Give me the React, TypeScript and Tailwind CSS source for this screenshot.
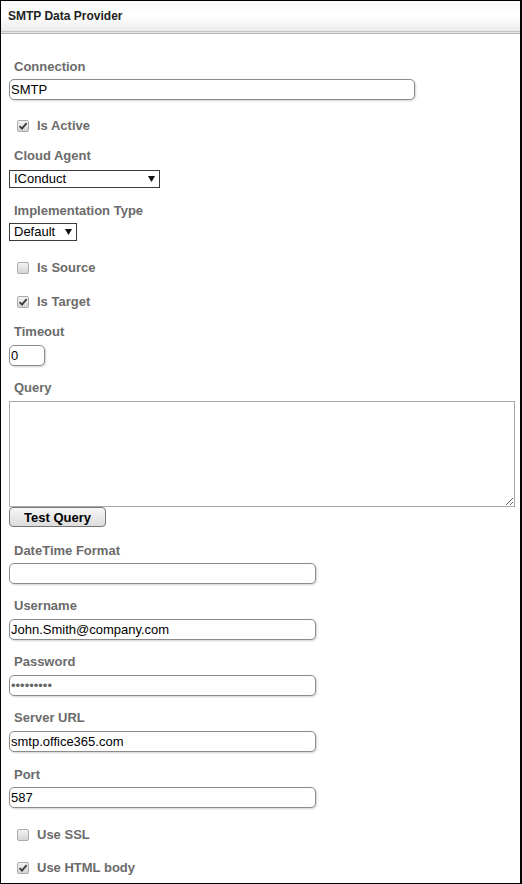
import React from 'react'

const labelCls = 'block ml-[5px] h-4 leading-4 text-[13px] font-bold text-[#6b6b6b]'
const inputCls =
  'block h-[21px] rounded-[5px] border border-[#8c8c8c] bg-white px-[1px] text-[13px] shadow-[1px_1px_2px_rgba(0,0,0,0.18)] outline-none'

function Check({ checked, label, className = '' }: { checked?: boolean; label: string; className?: string }) {
  return (
    <div className={`flex items-center h-4 ml-[8px] ${className}`}>
      <span className="flex items-center justify-center w-[12px] h-[12px] rounded-[2px] border border-[#ababab] bg-linear-to-b from-[#f2f2f2] to-[#d6d6d6]">
        {checked && (
          <svg width="10" height="10" viewBox="0 0 10 10">
            <path d="M1.6 5.2 L4 7.6 L8.6 2.2" fill="none" stroke="#3c3c3c" strokeWidth="1.8" />
          </svg>
        )}
      </span>
      <span className="ml-[8px] text-[13px] font-bold text-[#6b6b6b]">{label}</span>
    </div>
  )
}

function Select({ value, width, className = '' }: { value: string; width: string; className?: string }) {
  return (
    <div className={`flex items-center justify-between h-[18px] border border-[#3a3a3a] bg-white pl-[4px] pr-[4px] text-[13px] text-black ${width} ${className}`}>
      <span>{value}</span>
      <svg width="7" height="6" viewBox="0 0 7 6" className="ml-[4px]">
        <polygon points="0,0 7,0 3.5,6" fill="#111" />
      </svg>
    </div>
  )
}

export default function App() {
  return (
    <div className="w-[522px] h-[884px] overflow-hidden bg-white border-l border-t border-b border-r-2 border-black font-['Liberation_Sans',Arial,sans-serif]">
      <div className="flex items-center h-[30px] pl-[7px] bg-linear-to-b from-[#fafafa] via-white to-[#ebebeb] text-[12px] font-bold text-[#222]">
        SMTP Data Provider
      </div>
      <div className="h-px bg-[#c4c4c4]" />
      <div className="h-px bg-[#e6e6e6]" />
      <div className="h-px bg-[#b4b4b4]" />

      <div className="pl-[8px]">
        <label className={`${labelCls} mt-[25px]`}>Connection</label>
        <input readOnly value="SMTP" className={`${inputCls} text-black mt-[4px] w-[406px]`} />

        <Check checked label="Is Active" className="mt-[18px]" />

        <label className={`${labelCls} mt-[14px]`}>Cloud Agent</label>
        <Select value="IConduct" width="w-[151px]" className="mt-[6px]" />

        <label className={`${labelCls} mt-[15px]`}>Implementation Type</label>
        <Select value="Default" width="w-[68px]" className="mt-[4px]" />

        <Check label="Is Source" className="mt-[19px]" />
        <Check checked label="Is Target" className="mt-[18px]" />

        <label className={`${labelCls} mt-[14px]`}>Timeout</label>
        <input readOnly value="0" className={`${inputCls} text-black mt-[5px] w-[36px]`} />

        <label className={`${labelCls} mt-[14px]`}>Query</label>
        <textarea readOnly className="block mt-[5px] w-[506px] h-[106px] border border-[#a9a9a9] bg-white outline-none" />
        <button className="block h-[20px] w-[97px] rounded-[4px] border border-[#777] bg-linear-to-b from-[#f7f7f7] to-[#dcdcdc] text-[13px] font-bold text-black leading-none">
          Test Query
        </button>

        <label className={`${labelCls} mt-[16px]`}>DateTime Format</label>
        <input readOnly value="" className={`${inputCls} text-black mt-[4px] w-[307px]`} />

        <label className={`${labelCls} mt-[14px]`}>Username</label>
        <input readOnly value="John.Smith@company.com" className={`${inputCls} text-black mt-[5px] w-[307px]`} />

        <label className={`${labelCls} mt-[14px]`}>Password</label>
        <input readOnly type="password" value="123456789" className={`${inputCls} text-[#666] mt-[5px] w-[307px]`} />

        <label className={`${labelCls} mt-[14px]`}>Server URL</label>
        <input readOnly value="smtp.office365.com" className={`${inputCls} text-black mt-[5px] w-[307px]`} />

        <label className={`${labelCls} mt-[15px]`}>Port</label>
        <input readOnly value="587" className={`${inputCls} text-black mt-[4px] w-[307px]`} />

        <Check label="Use SSL" className="mt-[19px]" />
        <Check checked label="Use HTML body" className="mt-[17px]" />
      </div>
    </div>
  )
}
